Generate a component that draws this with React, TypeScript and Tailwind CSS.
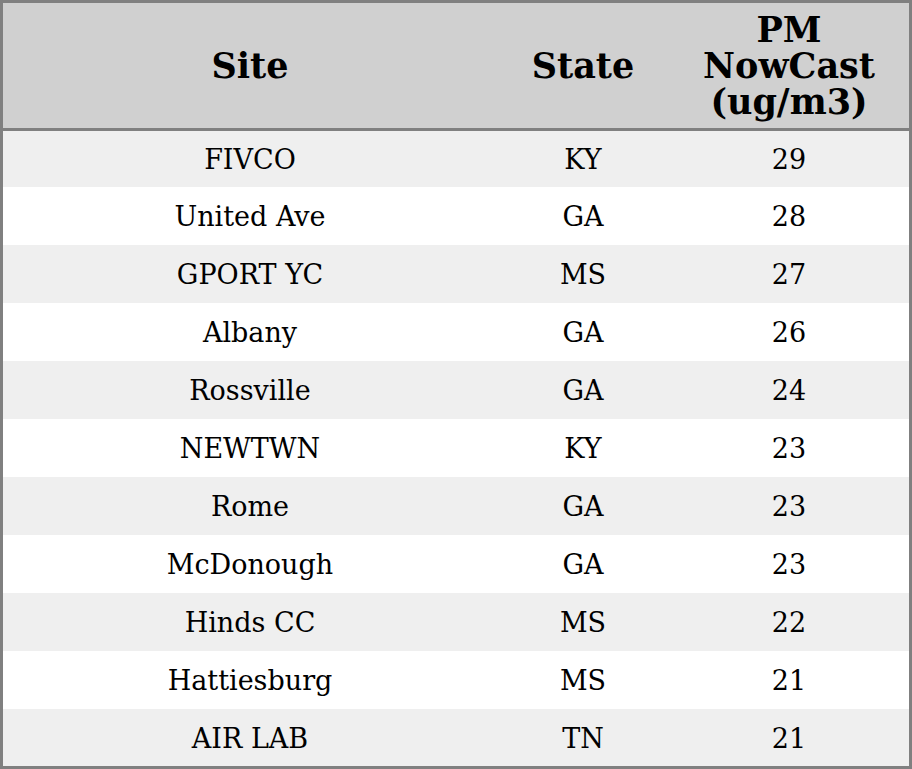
const rows = [
  { site: "FIVCO", state: "KY", pm: 29 },
  { site: "United Ave", state: "GA", pm: 28 },
  { site: "GPORT YC", state: "MS", pm: 27 },
  { site: "Albany", state: "GA", pm: 26 },
  { site: "Rossville", state: "GA", pm: 24 },
  { site: "NEWTWN", state: "KY", pm: 23 },
  { site: "Rome", state: "GA", pm: 23 },
  { site: "McDonough", state: "GA", pm: 23 },
  { site: "Hinds CC", state: "MS", pm: 22 },
  { site: "Hattiesburg", state: "MS", pm: 21 },
  { site: "AIR LAB", state: "TN", pm: 21 },
];

export default function App() {
  return (
    <div className="w-[912px] h-[769px] border-[3px] border-[#808080] bg-white text-black font-['DejaVu_Serif',serif]">
      {/* header */}
      <div className="grid grid-cols-[494px_172px_240px] h-[128px] bg-[#d0d0d0] border-b-[3px] border-[#808080] text-[35px] font-bold leading-[36px] text-center">
        <div className="flex items-center justify-center">Site</div>
        <div className="flex items-center justify-center">State</div>
        <div className="flex items-center justify-center">
          PM
          <br />
          NowCast
          <br />
          (ug/m3)
        </div>
      </div>
      {/* rows */}
      {rows.map((r, i) => (
        <div
          key={r.site}
          className={
            "grid grid-cols-[494px_172px_240px] text-[27px] leading-[30px] pt-[2px] text-center items-center " +
            (i % 2 === 0 ? "bg-[#efefef] " : "bg-white ") +
            (i === 0 ? "h-[56px]" : i === rows.length - 1 ? "h-[57px]" : "h-[58px]")
          }
        >
          <div>{r.site}</div>
          <div>{r.state}</div>
          <div>{r.pm}</div>
        </div>
      ))}
    </div>
  );
}
